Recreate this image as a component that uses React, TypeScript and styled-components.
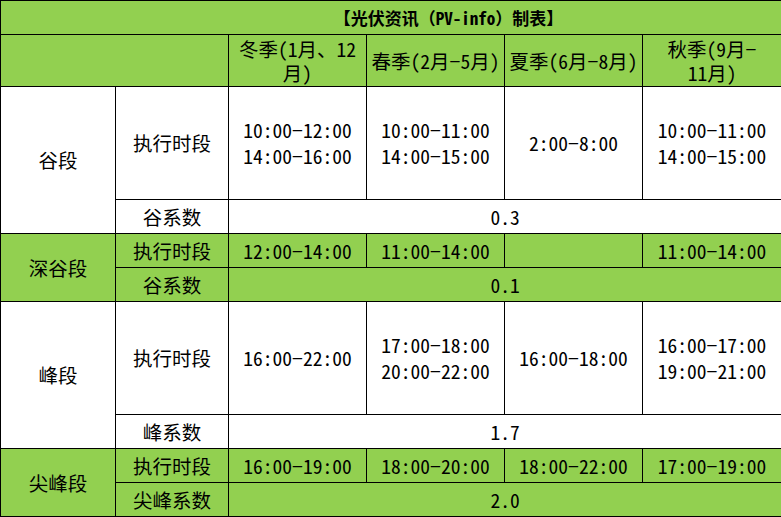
import React from 'react'
import styled, { createGlobalStyle } from 'styled-components'

const GREEN = '#92d050'

const GlobalStyle = createGlobalStyle`
  html, body {
    margin: 0;
    padding: 0;
    background: #fff;
  }
  body {
    font-family: "Noto Sans CJK SC", "Noto Sans", sans-serif;
    color: #000;
  }
`

const Table = styled.table`
  border-collapse: collapse;
  table-layout: fixed;
  width: 781px;
`

const Row = styled.tr<{ $h: number; $green?: boolean }>`
  height: ${p => p.$h}px;
  background: ${p => (p.$green ? GREEN : '#fff')};
`

const Cell = styled.td`
  border: 1px solid #000;
  padding: 0 3px;
  text-align: center;
  vertical-align: middle;
  font-size: 19.5px;
  line-height: 26px;
  white-space: pre-line;
  font-feature-settings: "hwid" 1;
  overflow: hidden;
`

const HeadCell = styled(Cell)`
  line-height: 24px;
`

const TitleCell = styled.td`
  border: 1px solid #000;
  padding: 0 0 0 115px;
  text-align: center;
  vertical-align: middle;
  font-size: 17px;
  font-weight: bold;
  line-height: 20px;
`

const Half = styled.span`
  font-feature-settings: "hwid" 1;
`

type Group = {
  name: string
  green: boolean
  execH: number
  times: string[]
  factorLabel: string
  factor: string
}

const seasons = ['冬季(1月、12\n月)', '春季(2月−5月)', '夏季(6月−8月)', '秋季(9月−\n11月)']

const groups: Group[] = [
  {
    name: '谷段',
    green: false,
    execH: 113,
    times: ['10:00−12:00\n14:00−16:00', '10:00−11:00\n14:00−15:00', '2:00−8:00', '10:00−11:00\n14:00−15:00'],
    factorLabel: '谷系数',
    factor: '0.3',
  },
  {
    name: '深谷段',
    green: true,
    execH: 34,
    times: ['12:00−14:00', '11:00−14:00', '', '11:00−14:00'],
    factorLabel: '谷系数',
    factor: '0.1',
  },
  {
    name: '峰段',
    green: false,
    execH: 113,
    times: ['16:00−22:00', '17:00−18:00\n20:00−22:00', '16:00−18:00', '16:00−17:00\n19:00−21:00'],
    factorLabel: '峰系数',
    factor: '1.7',
  },
  {
    name: '尖峰段',
    green: true,
    execH: 34,
    times: ['16:00−19:00', '18:00−20:00', '18:00−22:00', '17:00−19:00'],
    factorLabel: '尖峰系数',
    factor: '2.0',
  },
]

export default function App() {
  return (
    <>
      <GlobalStyle />
      <Table>
        <colgroup>
          <col style={{ width: 115 }} />
          <col style={{ width: 113 }} />
          <col style={{ width: 138 }} />
          <col style={{ width: 138 }} />
          <col style={{ width: 138 }} />
          <col style={{ width: 139 }} />
        </colgroup>
        <tbody>
          <Row $h={34} $green>
            <TitleCell colSpan={6}>
              【光伏资讯（<Half>PV-info</Half>）制表】
            </TitleCell>
          </Row>
          <Row $h={52} $green>
            <HeadCell colSpan={2} />
            {seasons.map(s => (
              <HeadCell key={s}>{s}</HeadCell>
            ))}
          </Row>
          {groups.map(g => (
            <React.Fragment key={g.name}>
              <Row $h={g.execH} $green={g.green}>
                <Cell rowSpan={2}>{g.name}</Cell>
                <Cell>执行时段</Cell>
                {g.times.map((t, i) => (
                  <Cell key={i}>{t}</Cell>
                ))}
              </Row>
              <Row $h={34} $green={g.green}>
                <Cell>{g.factorLabel}</Cell>
                <Cell colSpan={4}>{g.factor}</Cell>
              </Row>
            </React.Fragment>
          ))}
        </tbody>
      </Table>
    </>
  )
}
